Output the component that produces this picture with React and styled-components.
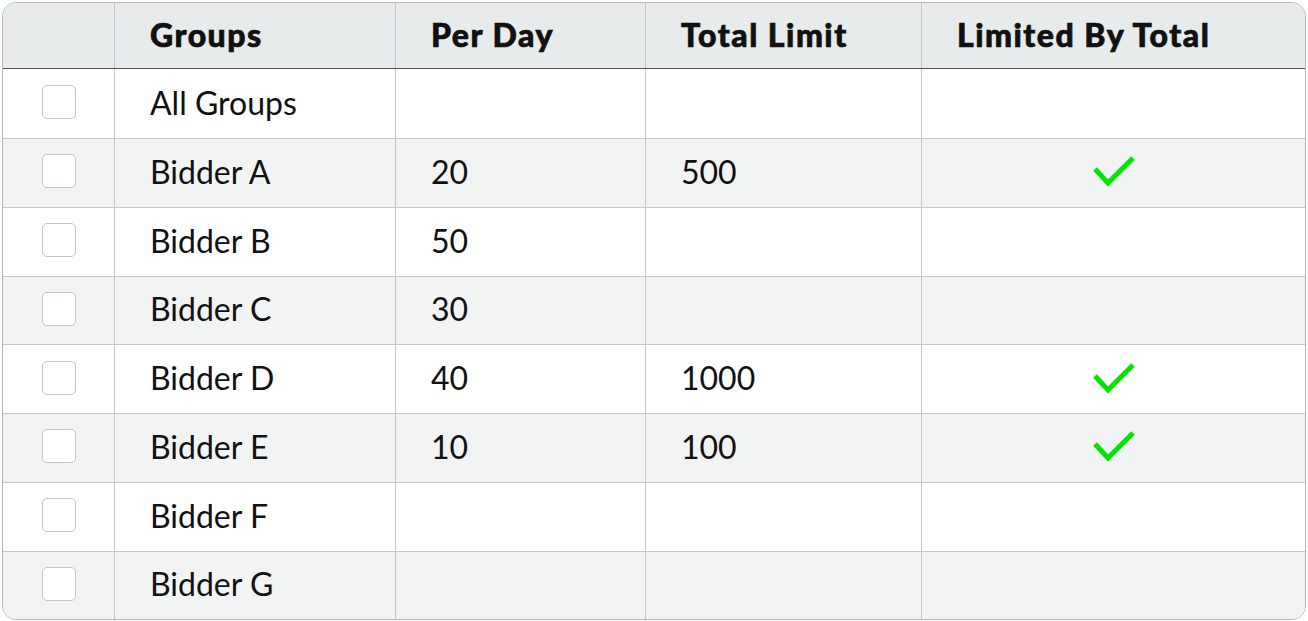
import styled, { createGlobalStyle } from 'styled-components';

const GlobalStyle = createGlobalStyle`
  body {
    margin: 0;
    background: #ffffff;
    font-family: Lato, "Liberation Sans", sans-serif;
  }
`;

const Page = styled.div`
  padding: 2px;
`;

const Table = styled.div`
  width: 1304px;
  border: 1px solid #b4b8bc;
  border-radius: 14px;
  overflow: hidden;
  box-sizing: border-box;
`;

const Row = styled.div`
  display: grid;
  grid-template-columns: 111px 281px 250px 276px 1fr;
  height: ${(p) => (p.$head ? '66px' : p.$first ? '69px' : '68.75px')};
  background: ${(p) => (p.$head ? '#e7ebeb' : p.$striped ? '#f2f3f3' : '#ffffff')};
  border-top: ${(p) => (p.$first || p.$head ? 'none' : '1px solid #c4c7ca')};
  border-bottom: ${(p) => (p.$head ? '1px solid #4e5358' : 'none')};
  box-sizing: border-box;
`;

const Cell = styled.div`
  display: flex;
  align-items: center;
  justify-content: ${(p) => (p.$center ? 'center' : 'flex-start')};
  padding-left: ${(p) => (p.$center ? '0' : '35px')};
  border-left: ${(p) => (p.$noLine ? 'none' : '1px solid #c4c7ca')};
  font-size: 32px;
  font-weight: 400;
  color: #111;
  padding-bottom: 3px;
`;

const HeadCell = styled(Cell)`
  font-weight: 900;
  letter-spacing: 1.5px;
  -webkit-text-stroke: 0.7px #111;
  color: #111;
  padding-bottom: 3px;
`;

const Box = styled.div`
  width: 34px;
  height: 34px;
  border: 1.5px solid #c2c4c6;
  border-radius: 5px;
  background: #fff;
  box-sizing: border-box;
`;

const Check = () => (
  <svg width="44" height="32" viewBox="0 0 44 32">
    <polyline points="3,14 16,28 41,3" fill="none" stroke="#00e600" strokeWidth="5" />
  </svg>
);

const rows = [
  { name: 'All Groups' },
  { name: 'Bidder A', day: '20', total: '500', limited: true },
  { name: 'Bidder B', day: '50' },
  { name: 'Bidder C', day: '30' },
  { name: 'Bidder D', day: '40', total: '1000', limited: true },
  { name: 'Bidder E', day: '10', total: '100', limited: true },
  { name: 'Bidder F' },
  { name: 'Bidder G' },
];

export default function App() {
  return (
    <Page>
      <GlobalStyle />
      <Table>
        <Row $head>
          <HeadCell $noLine />
          <HeadCell>Groups</HeadCell>
          <HeadCell>Per Day</HeadCell>
          <HeadCell>Total Limit</HeadCell>
          <HeadCell>Limited By Total</HeadCell>
        </Row>
        {rows.map((r, i) => (
          <Row key={r.name} $first={i === 0} $striped={i % 2 === 1}>
            <Cell $noLine $center>
              <Box />
            </Cell>
            <Cell>{r.name}</Cell>
            <Cell>{r.day}</Cell>
            <Cell>{r.total}</Cell>
            <Cell $center>{r.limited && <Check />}</Cell>
          </Row>
        ))}
      </Table>
    </Page>
  );
}
